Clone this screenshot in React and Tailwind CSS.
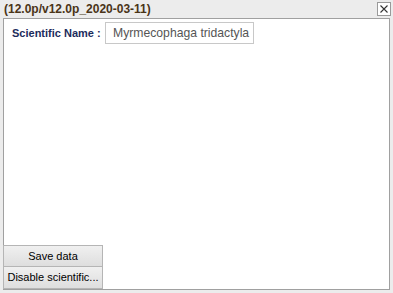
export default function App() {
  const f = { fontFamily: '"Liberation Sans", Arial, sans-serif' };
  return (
    <div className="w-[393px] h-[293px] bg-[#ececec] flex flex-col px-[3px] pb-[3px]" style={f}>
      <div className="h-[18px] flex items-center justify-between">
        <span className="text-[12px] font-bold text-[#4a3418] pl-[1px] leading-none">(12.0p/v12.0p_2020-03-11)</span>
        <div className="w-[14px] h-[14px] border border-[#9a9a9a] bg-white flex items-center justify-center mr-[-1px]">
          <svg width="10" height="10" viewBox="0 0 10 10">
            <path d="M1.5 1.5 L8.5 8.5 M8.5 1.5 L1.5 8.5" stroke="#333" strokeWidth="1.1" />
          </svg>
        </div>
      </div>
      <div className="flex-1 bg-white border border-[#a0a0a0] flex flex-col">
        <div className="flex items-center pt-[3px] pl-[8px]">
          <span className="text-[11px] font-bold text-[#1c2c5c] w-[93px]">Scientific Name :</span>
          <div className="w-[149px] h-[22px] border border-[#c8c8c8] flex items-center pl-[7px] text-[12.2px] text-[#555] whitespace-nowrap overflow-hidden">Myrmecophaga tridactyla</div>
        </div>
        <div className="flex-1" />
        <div className="flex flex-col w-[100px] ml-[-1px]">
          <button className="h-[22px] border border-[#b5b5b5] bg-gradient-to-b from-[#f0f0f0] to-[#dedede] text-[11px] text-black">Save data</button>
          <button className="h-[22px] border border-[#b5b5b5] border-t-0 bg-gradient-to-b from-[#f0f0f0] to-[#dedede] text-[11px] text-black whitespace-nowrap overflow-hidden px-[2px]">Disable scientific...</button>
        </div>
      </div>
    </div>
  );
}
